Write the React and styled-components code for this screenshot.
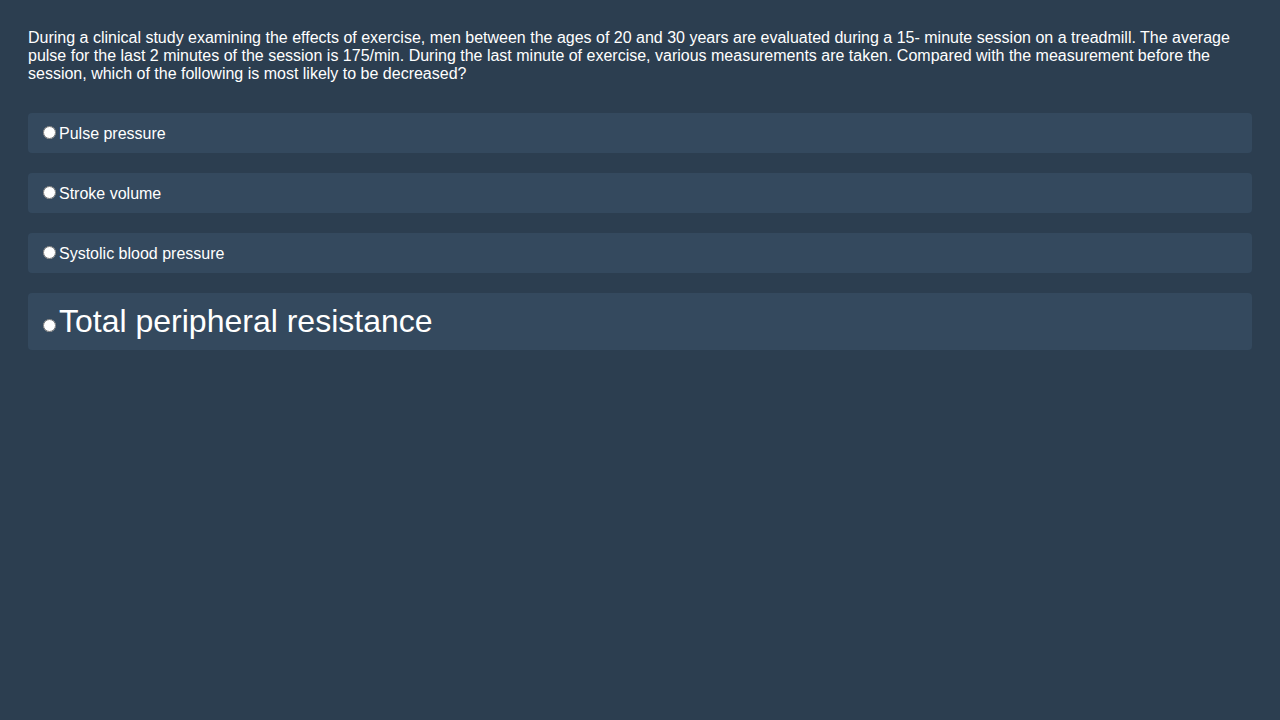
import React from "react";
import styled, { createGlobalStyle } from "styled-components";

const GlobalStyle = createGlobalStyle`
  html, body {
    margin: 0;
    background: #2c3e50;
  }
  body {
    font-family: "Liberation Sans", Arial, sans-serif;
    color: #ffffff;
    min-height: 720px;
  }
`;

const Page = styled.div`
  padding: 29px 28px 28px;
`;

const Question = styled.p`
  margin: 0 0 30px;
  font-size: 16px;
  line-height: normal;
`;

const Options = styled.div`
  display: flex;
  flex-direction: column;
  gap: 20px;
`;

const Option = styled.label`
  display: block;
  padding: 10px;
  background: #34495e;
  border-radius: 4px;
  font-size: ${props => (props.big ? "32px" : "16px")};
  cursor: pointer;
`;

const Radio = styled.input`
  margin: 3px 3px 0 5px;
`;

const answers = [
  "Pulse pressure",
  "Stroke volume",
  "Systolic blood pressure",
  "Total peripheral resistance"
];

export default function App() {
  return (
    <Page>
      <GlobalStyle />
      <Question>
        During a clinical study examining the effects of exercise, men between
        the ages of 20 and 30 years are evaluated during a 15- minute session on
        a treadmill. The average pulse for the last 2 minutes of the session is
        175/min. During the last minute of exercise, various measurements are
        taken. Compared with the measurement before the session, which of the
        following is most likely to be decreased?
      </Question>
      <Options>
        {answers.map((item, index) => (
          <Option key={item} big={index === 3}>
            <Radio type="radio" name="answer" />
            {item}
          </Option>
        ))}
      </Options>
    </Page>
  );
}
